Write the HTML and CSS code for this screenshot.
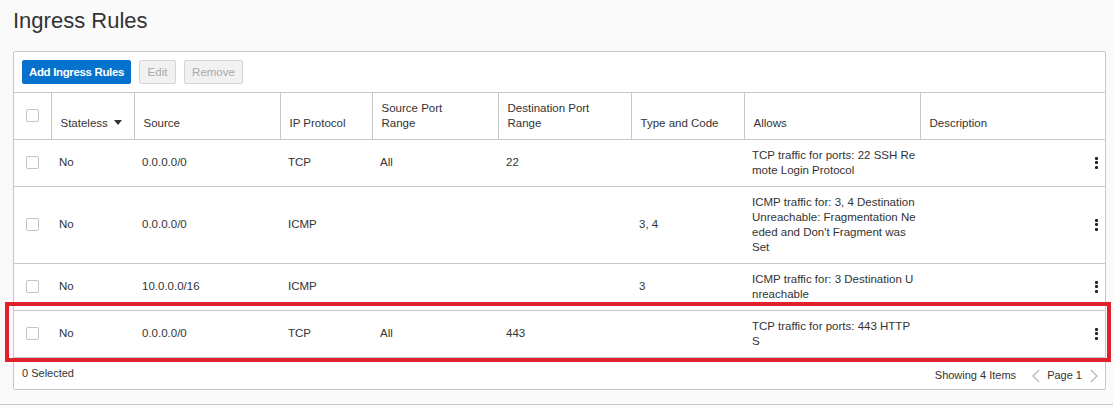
FILE: index.html
```html
<!DOCTYPE html>
<html>
<head>
<meta charset="utf-8">
<link rel="stylesheet" href="styles.css">
</head>
<body>
<div class="page">
  <h1 class="title">Ingress Rules</h1>
  <div class="panel">
    <div class="toolbar">
      <button class="btn btn-primary">Add Ingress Rules</button>
      <button class="btn btn-disabled btn-edit">Edit</button>
      <button class="btn btn-disabled btn-remove">Remove</button>
    </div>
    <div class="table-wrap">
      <table class="rules">
        <colgroup>
          <col class="c-check">
          <col class="c-stateless">
          <col class="c-source">
          <col class="c-proto">
          <col class="c-sport">
          <col class="c-dport">
          <col class="c-type">
          <col class="c-allows">
          <col class="c-desc">
          <col class="c-menu">
        </colgroup>
        <thead>
          <tr>
            <th class="th-check"><span class="checkbox"></span></th>
            <th>Stateless <span class="sort-caret"></span></th>
            <th>Source</th>
            <th>IP Protocol</th>
            <th>Source Port<br>Range</th>
            <th>Destination Port<br>Range</th>
            <th>Type and Code</th>
            <th>Allows</th>
            <th class="th-desc">Description</th>
            <th class="th-menu"></th>
          </tr>
        </thead>
        <tbody>
          <tr>
            <td class="td-check"><span class="checkbox"></span></td>
            <td>No</td>
            <td>0.0.0.0/0</td>
            <td>TCP</td>
            <td>All</td>
            <td>22</td>
            <td></td>
            <td class="allows">TCP traffic for ports: 22 SSH Remote Login Protocol</td>
            <td></td>
            <td class="td-menu"><span class="kebab"><i></i><i></i><i></i></span></td>
          </tr>
          <tr>
            <td class="td-check"><span class="checkbox"></span></td>
            <td>No</td>
            <td>0.0.0.0/0</td>
            <td>ICMP</td>
            <td></td>
            <td></td>
            <td>3, 4</td>
            <td class="allows">ICMP traffic for: 3, 4 Destination Unreachable: Fragmentation Needed and Don't Fragment was Set</td>
            <td></td>
            <td class="td-menu"><span class="kebab"><i></i><i></i><i></i></span></td>
          </tr>
          <tr>
            <td class="td-check"><span class="checkbox"></span></td>
            <td>No</td>
            <td>10.0.0.0/16</td>
            <td>ICMP</td>
            <td></td>
            <td></td>
            <td>3</td>
            <td class="allows">ICMP traffic for: 3 Destination Unreachable</td>
            <td></td>
            <td class="td-menu"><span class="kebab"><i></i><i></i><i></i></span></td>
          </tr>
          <tr class="highlight-row">
            <td class="td-check"><span class="checkbox"></span></td>
            <td>No</td>
            <td>0.0.0.0/0</td>
            <td>TCP</td>
            <td>All</td>
            <td>443</td>
            <td></td>
            <td class="allows">TCP traffic for ports: 443 HTTPS</td>
            <td></td>
            <td class="td-menu"><span class="kebab"><i></i><i></i><i></i></span></td>
          </tr>
        </tbody>
      </table>
      <div class="highlight-box"></div>
    </div>
    <div class="footer">
      <span class="selected">0 Selected</span>
      <div class="pager">
        <span class="showing">Showing 4 Items</span>
        <svg class="chev" width="10" height="14" viewBox="0 0 10 14"><polyline points="8,1 2,7 8,13" fill="none" stroke="#b5b5b5" stroke-width="1.2"/></svg>
        <span class="page-no">Page 1</span>
        <svg class="chev" width="10" height="14" viewBox="0 0 10 14"><polyline points="2,1 8,7 2,13" fill="none" stroke="#b5b5b5" stroke-width="1.2"/></svg>
      </div>
    </div>
  </div>
</div>
<div class="bottom-rule"></div>
</body>
</html>
```
FILE: styles.css
```css
* { box-sizing: border-box; }
html, body { margin: 0; padding: 0; }
body {
  background: #fafafa;
  font-family: "Liberation Sans", Arial, sans-serif;
  color: #333;
  font-size: 12px;
  width: 1113px;
  height: 408px;
  overflow: hidden;
}
.page {
  padding: 9px 7px 0 13px;
}
.title {
  margin: 0;
  font-size: 22px;
  line-height: 24px;
  font-weight: normal;
  color: #333;
}
.panel {
  margin-top: 18px;
  background: #fff;
  border: 1px solid #c8c8c8;
  border-radius: 2px;
  height: 339px;
  display: flex;
  flex-direction: column;
}
.toolbar {
  display: flex;
  gap: 8px;
  padding: 8px 8px;
  border-bottom: 1px solid #c8c8c8;
}
.btn {
  height: 24px;
  font-family: "Liberation Sans", Arial, sans-serif;
  font-size: 11.5px;
  border-radius: 2px;
  padding: 0;
  margin: 0;
}
.btn-primary {
  width: 109px;
  background: #0572ce;
  border: 1px solid #0572ce;
  color: #fff;
  font-weight: bold;
  letter-spacing: -0.35px;
}
.btn-disabled {
  background: #f1f1f1;
  border: 1px solid #d6d6d6;
  color: #a9a9a9;
}
.btn-edit { width: 37px; }
.btn-remove { width: 59px; }

.table-wrap { position: relative; }
.rules {
  width: 1091px;
  border-collapse: collapse;
  table-layout: fixed;
  font-size: 11.5px;
}
.c-check { width: 37px; }
.c-stateless { width: 83px; }
.c-source { width: 146px; }
.c-proto { width: 92px; }
.c-sport { width: 126px; }
.c-dport { width: 133px; }
.c-type { width: 113px; }
.c-allows { width: 176px; }
.c-desc { width: 160px; }
.c-menu { width: 25px; }

.rules th {
  height: 46px;
  text-align: left;
  vertical-align: bottom;
  font-weight: normal;
  line-height: 15px;
  padding: 0 6px 8px 9px;
  border-right: 1px solid #c8c8c8;
  border-bottom: 1px solid #c8c8c8;
  color: #333;
  white-space: nowrap;
}
.rules th.th-check {
  vertical-align: middle;
  padding: 0 0 0 12px;
}
.rules th.th-desc, .rules th.th-menu { border-right: none; }
.sort-caret {
  display: inline-block;
  width: 0; height: 0;
  border-left: 4px solid transparent;
  border-right: 4px solid transparent;
  border-top: 5px solid #333;
  margin-left: 3px;
  vertical-align: 2px;
}
.rules td {
  padding: 8px 8px;
  line-height: 15px;
  vertical-align: middle;
  border-bottom: 1px solid #c8c8c8;
  color: #333;
}
.rules td.td-check { padding-left: 12px; }
.rules td.allows { word-break: break-all; padding-right: 4px; }
.rules td.td-menu { padding: 0 0 0 15px; }
.checkbox {
  display: block;
  width: 13px;
  height: 13px;
  border: 1px solid #c4c4c4;
  border-radius: 2px;
  background: #fff;
}
.kebab {
  display: flex;
  flex-direction: column;
  gap: 1.5px;
  width: 3px;
}
.kebab i {
  display: block;
  width: 3px;
  height: 3px;
  background: #222;
  border-radius: 1px;
}
.highlight-box {
  position: absolute;
  left: -9px;
  top: 209px;
  width: 1106px;
  height: 60px;
  border: 4px solid #e1202c;
  pointer-events: none;
}
.footer {
  flex: 1;
  display: flex;
  justify-content: space-between;
  align-items: flex-start;
  padding: 9px 6px 0 8px;
  font-size: 11px;
}
.pager {
  display: flex;
  align-items: center;
}
.showing { margin-right: 15px; }
.page-no { margin: 0 7px 0 6px; }
.chev { display: block; margin-top: 2px; }
.bottom-rule {
  margin-top: 14px;
  border-top: 1px solid #c8c8c8;
}
```
